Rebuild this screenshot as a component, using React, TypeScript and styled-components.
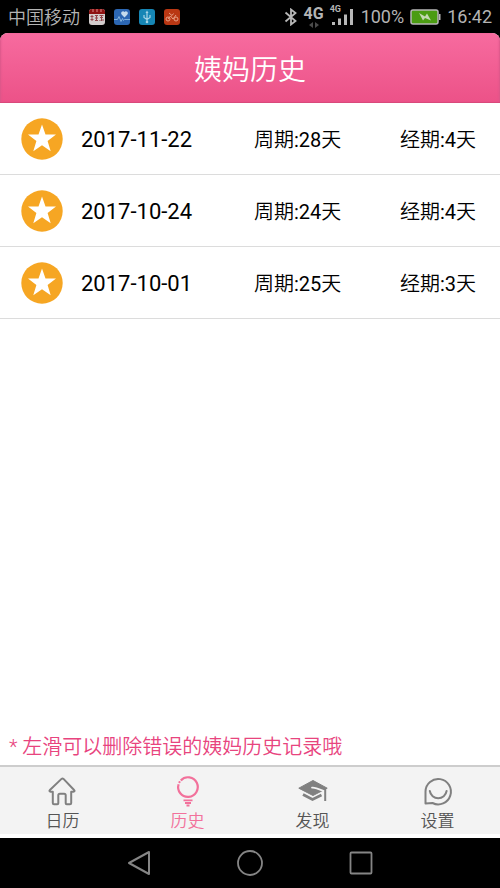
import React from "react";
import styled, { createGlobalStyle } from "styled-components";

const GlobalStyle = createGlobalStyle`
  * { box-sizing: border-box; }
  body {
    margin: 0;
    background: #000;
    font-family: Roboto, "Noto Sans CJK SC", sans-serif;
  }
  button { font: inherit; border: 0; padding: 0; background: none; cursor: pointer; }
`;

const Screen = styled.div`
  display: flex;
  flex-direction: column;
  min-height: 100vh;
  background: #000;
`;

const StatusBar = styled.div`
  display: flex;
  align-items: center;
  justify-content: space-between;
  height: 33px;
  padding: 0 8px;
  color: #b4b4b4;
  font-size: 18px;
  line-height: 24px;
`;

const StatusGroup = styled.div<{ $gap: number }>`
  display: flex;
  align-items: center;
  gap: ${(p) => p.$gap}px;
  white-space: nowrap;
`;

const Carrier = styled.span`
  padding-top: 2px;
  font-weight: 350;
`;

const Network = styled.span`
  display: flex;
  flex-direction: column;
  align-items: center;
  font-size: 16px;
  font-weight: 700;
  line-height: 16px;
`;

const Signal = styled.span`
  position: relative;
  display: block;
  height: 20px;
  margin-right: 2px;
`;

const SignalTag = styled.span`
  position: absolute;
  left: 0;
  top: -2px;
  font-size: 9px;
  font-weight: 700;
  line-height: 8px;
`;

const Content = styled.main`
  flex: 1;
  display: flex;
  flex-direction: column;
  background: #fff;
  border-radius: 8px 8px 0 0;
  overflow: hidden;
`;

const Header = styled.header`
  display: flex;
  align-items: center;
  justify-content: center;
  height: 70px;
  padding-top: 6px;
  background: linear-gradient(#f76b9f, #ec5288);
  border-bottom: 1px solid #d9497b;
  box-shadow: inset 2px 0 2px -1px #d9578a, inset -2px 0 2px -1px #d9578a;
`;

const Title = styled.h1`
  margin: 0;
  color: #fff;
  font-size: 28px;
  font-weight: 350;
  line-height: 40px;
`;

const List = styled.ul`
  flex: 1;
  margin: 0;
  padding: 0;
  list-style: none;
`;

const Row = styled.li`
  display: flex;
  align-items: center;
  height: 72px;
  padding: 0 24px 0 21px;
  border-bottom: 1px solid #dcdcdc;
  color: #000;
  white-space: nowrap;
`;

const DateText = styled.time`
  flex: 1;
  padding: 2px 0 0 18px;
  font-size: 22px;
  line-height: 32px;
`;

const Info = styled.span<{ $width?: number }>`
  width: ${(p) => (p.$width ? `${p.$width}px` : "auto")};
  padding-top: 2px;
  font-size: 20px;
  font-weight: 350;
  line-height: 32px;
`;

const Count = styled.span`
  font-weight: 400;
`;

const Hint = styled.p`
  margin: 0;
  padding: 0 9px 3px;
  color: #e8447e;
  font-size: 20px;
  font-weight: 350;
  line-height: 30px;
`;

const Tabs = styled.nav`
  display: flex;
  height: 73px;
  background: #f3f3f3;
  border-top: 2px solid #cdcdcd;
  border-bottom: 4px solid #fff;
`;

const Tab = styled.button<{ $active?: boolean }>`
  flex: 1;
  display: flex;
  flex-direction: column;
  align-items: center;
  gap: 2px;
  padding-top: 10px;
  color: ${(p) => (p.$active ? "#f2719b" : "#808080")};
`;

const TabLabel = styled.span<{ $active?: boolean }>`
  color: ${(p) => (p.$active ? "#f2719b" : "#555")};
  font-size: 17px;
  font-weight: 350;
  line-height: 24px;
`;

const NavBar = styled.nav`
  display: flex;
  justify-content: center;
  height: 50px;
`;

const NavButton = styled.button`
  display: flex;
  align-items: center;
  justify-content: center;
  width: 111px;
  color: #858585;
`;

const CalendarApp = () => (
  <svg width="16" height="16" viewBox="0 0 16 16">
    <rect width="16" height="16" rx="3" fill="#d3cdcd" />
    <path d="M0 5V3a3 3 0 0 1 3-3h10a3 3 0 0 1 3 3v2z" fill="#8d1212" />
    <path d="M4 0v3M8 0v3M12 0v3" stroke="#d88" strokeWidth="1" />
    <path d="M1.5 7.5h3M3 6v6M1.5 10.500h3M6 6.500h3M7.500 6v5.500M6 9h3M6 11.500h3M10.500 6.500h4M11 8.500h3M10.500 11.500h1M12.500 6v6M14 10v2" stroke="#93454a" strokeWidth="1" fill="none" />
  </svg>
);

const HealthApp = () => (
  <svg width="16" height="16" viewBox="0 0 16 16">
    <rect width="16" height="16" rx="3" fill="#2c67b3" />
    <path d="M10.500 8.500 7.600 5.500a1.900 1.900 0 0 1 2.900-2.500 1.900 1.900 0 0 1 2.900 2.500z" fill="#c6dced" />
    <path d="M0 10.500h3.500l1.500-3 2 5 1.500-3 1 2 1-1H16" stroke="#82b1dc" fill="none" />
  </svg>
);

const UsbApp = () => (
  <svg width="16" height="16" viewBox="0 0 16 16">
    <rect width="16" height="16" rx="3" fill="#1686b5" />
    <path d="M8 3v10M5 6v2.500l3 2 3-2V6" stroke="#a5d4e6" strokeWidth="1.200" fill="none" />
    <path d="m8 1.500 1.500 2.500h-3z" fill="#a5d4e6" />
    <circle cx="8" cy="13" r="1.300" fill="#a5d4e6" />
  </svg>
);

const SportApp = () => (
  <svg width="16" height="16" viewBox="0 0 16 16">
    <rect width="16" height="16" rx="3" fill="#b93713" />
    <g stroke="#e7a187" fill="none">
      <circle cx="4" cy="10" r="2" />
      <circle cx="12" cy="10" r="2" />
      <path d="m4 10 2.500-3L9 10l3-4M5 4l3 2.500 1.500-2" />
    </g>
  </svg>
);

const Bluetooth = () => (
  <svg width="14" height="18" viewBox="0 0 14 18" fill="none" stroke="#b8b8b8" strokeWidth="1.800">
    <path d="m1.500 4.500 10 8.500L7 16.500v-15L11.500 5l-10 8.500" />
  </svg>
);

const DataArrows = () => (
  <svg width="12" height="6" viewBox="0 0 12 6" fill="#4a4a4a">
    <path d="M5 0v6L1 3zM7 0v6l4-3z" />
  </svg>
);

const SignalBars = () => (
  <svg width="23" height="20" viewBox="0 0 23 20" fill="#b8b8b8">
    <path d="M2 15h3v3H2zM8 11.500h3V18H8zM14 7.500h3V18h-3zM20 2h3v16h-3z" />
  </svg>
);

const Battery = () => (
  <svg width="31" height="16" viewBox="0 0 31 16">
    <rect x="1" y="1" width="27" height="14" rx="2" fill="#4b9c12" stroke="#b8b8b8" strokeWidth="1.500" />
    <path d="M29 5h1.500v6H29z" fill="#b8b8b8" />
    <path d="m9 4 6 3.500 2-3 4 7-6-2.500-2 2.500z" fill="#c3d8b2" />
  </svg>
);

const StarBadge = () => (
  <svg width="42" height="42" viewBox="0 0 42 42">
    <circle cx="21" cy="21" r="20.700" fill="#f6a623" />
    <path d="m21 6.500 3.500 10H35l-8.400 6.400 3.100 10.300L21 27.200l-8.700 6 3.100-10.300L7 16.500h10.500z" fill="#fff" />
  </svg>
);

const iconProps = { width: 30, height: 30, viewBox: "0 0 30 30", fill: "none", stroke: "currentColor", overflow: "visible" };

const HomeIcon = () => (
  <svg {...iconProps} strokeWidth="2" strokeLinejoin="round">
    <path d="M13.500 1.900 1.900 13c-.9.900-.4 1.700.6 1.700h2.300V26c0 .8.400 1.200 1.200 1.200h3.300c.700 0 1-.4 1-1v-8c0-1 .5-1.500 1.500-1.500h4.400c1 0 1.500.5 1.500 1.500v8c0 .6.300 1 1 1h3.300c.8 0 1.200-.4 1.200-1.200V14.700h2.300c1 0 1.500-.8.600-1.700L15.500 1.900c-.6-.5-1.400-.5-2 0z" />
  </svg>
);

const BulbIcon = () => (
  <svg {...iconProps} strokeWidth="2.200">
    <path d="M7.800 3.400A9.800 9.800 0 1 1 5.600 7.200" />
    <circle cx="6.500" cy="5.200" r="1.100" fill="currentColor" stroke="none" />
    <path d="M10.500 23.400h9M12 26h6M13.500 28.500h3" strokeWidth="1.800" />
  </svg>
);

const CapIcon = () => (
  <svg {...iconProps}>
    <path d="M15 3.500.8 11.200 15 18.500l14.200-7.300z" fill="currentColor" />
    <path d="M14 10.600c2.500-.6 4.500.4 12.500 3.800" stroke="#f3f3f3" strokeWidth="1.800" strokeLinecap="round" />
    <path d="M27.200 11.500V24" strokeWidth="2" />
    <path d="m5 17.500 9.500 5 9-4.500" strokeWidth="2.800" />
  </svg>
);

const ChatIcon = () => (
  <svg {...iconProps} strokeWidth="2" strokeLinejoin="round" strokeLinecap="round">
    <path d="M2.500 26.500V14.500a12.700 12.700 0 1 1 7 11.500z" />
    <path d="M6.800 14a8.500 8.500 0 0 0 16.800 0" />
  </svg>
);

const records = [
  { date: "2017-11-22", cycle: 28, period: 4 },
  { date: "2017-10-24", cycle: 24, period: 4 },
  { date: "2017-10-01", cycle: 25, period: 3 },
];

const tabs = [
  { label: "日历", Icon: HomeIcon },
  { label: "历史", Icon: BulbIcon, active: true },
  { label: "发现", Icon: CapIcon },
  { label: "设置", Icon: ChatIcon },
];

export default function App() {
  return (
    <Screen>
      <GlobalStyle />
      <StatusBar>
        <StatusGroup $gap={9}>
          <Carrier>中国移动</Carrier>
          <CalendarApp />
          <HealthApp />
          <UsbApp />
          <SportApp />
        </StatusGroup>
        <StatusGroup $gap={6}>
          <Bluetooth />
          <Network>
            4G
            <DataArrows />
          </Network>
          <Signal>
            <SignalTag>4G</SignalTag>
            <SignalBars />
          </Signal>
          <span>100%</span>
          <Battery />
          <span>16:42</span>
        </StatusGroup>
      </StatusBar>
      <Content>
        <Header>
          <Title>姨妈历史</Title>
        </Header>
        <List>
          {records.map((r) => (
            <Row key={r.date}>
              <StarBadge />
              <DateText dateTime={r.date}>{r.date}</DateText>
              <Info $width={146}>
                周期<Count>:{r.cycle}</Count>天
              </Info>
              <Info>
                经期<Count>:{r.period}</Count>天
              </Info>
            </Row>
          ))}
        </List>
        <Hint>* 左滑可以删除错误的姨妈历史记录哦</Hint>
        <Tabs>
          {tabs.map(({ label, Icon, active }) => (
            <Tab key={label} type="button" $active={active} aria-current={active ? "page" : undefined}>
              <Icon />
              <TabLabel $active={active}>{label}</TabLabel>
            </Tab>
          ))}
        </Tabs>
      </Content>
      <NavBar>
        <NavButton type="button" aria-label="返回">
          <svg width="26" height="26" viewBox="0 0 26 26" fill="none" stroke="currentColor" strokeWidth="2" strokeLinejoin="round">
            <path d="M23 2v22L3 13z" />
          </svg>
        </NavButton>
        <NavButton type="button" aria-label="主页">
          <svg width="26" height="26" viewBox="0 0 26 26" fill="none" stroke="currentColor" strokeWidth="1.800">
            <circle cx="13" cy="13" r="12" />
          </svg>
        </NavButton>
        <NavButton type="button" aria-label="最近任务">
          <svg width="26" height="26" viewBox="0 0 26 26" fill="none" stroke="currentColor" strokeWidth="1.800">
            <rect x="2.500" y="2.500" width="21" height="21" rx="1" />
          </svg>
        </NavButton>
      </NavBar>
    </Screen>
  );
}
